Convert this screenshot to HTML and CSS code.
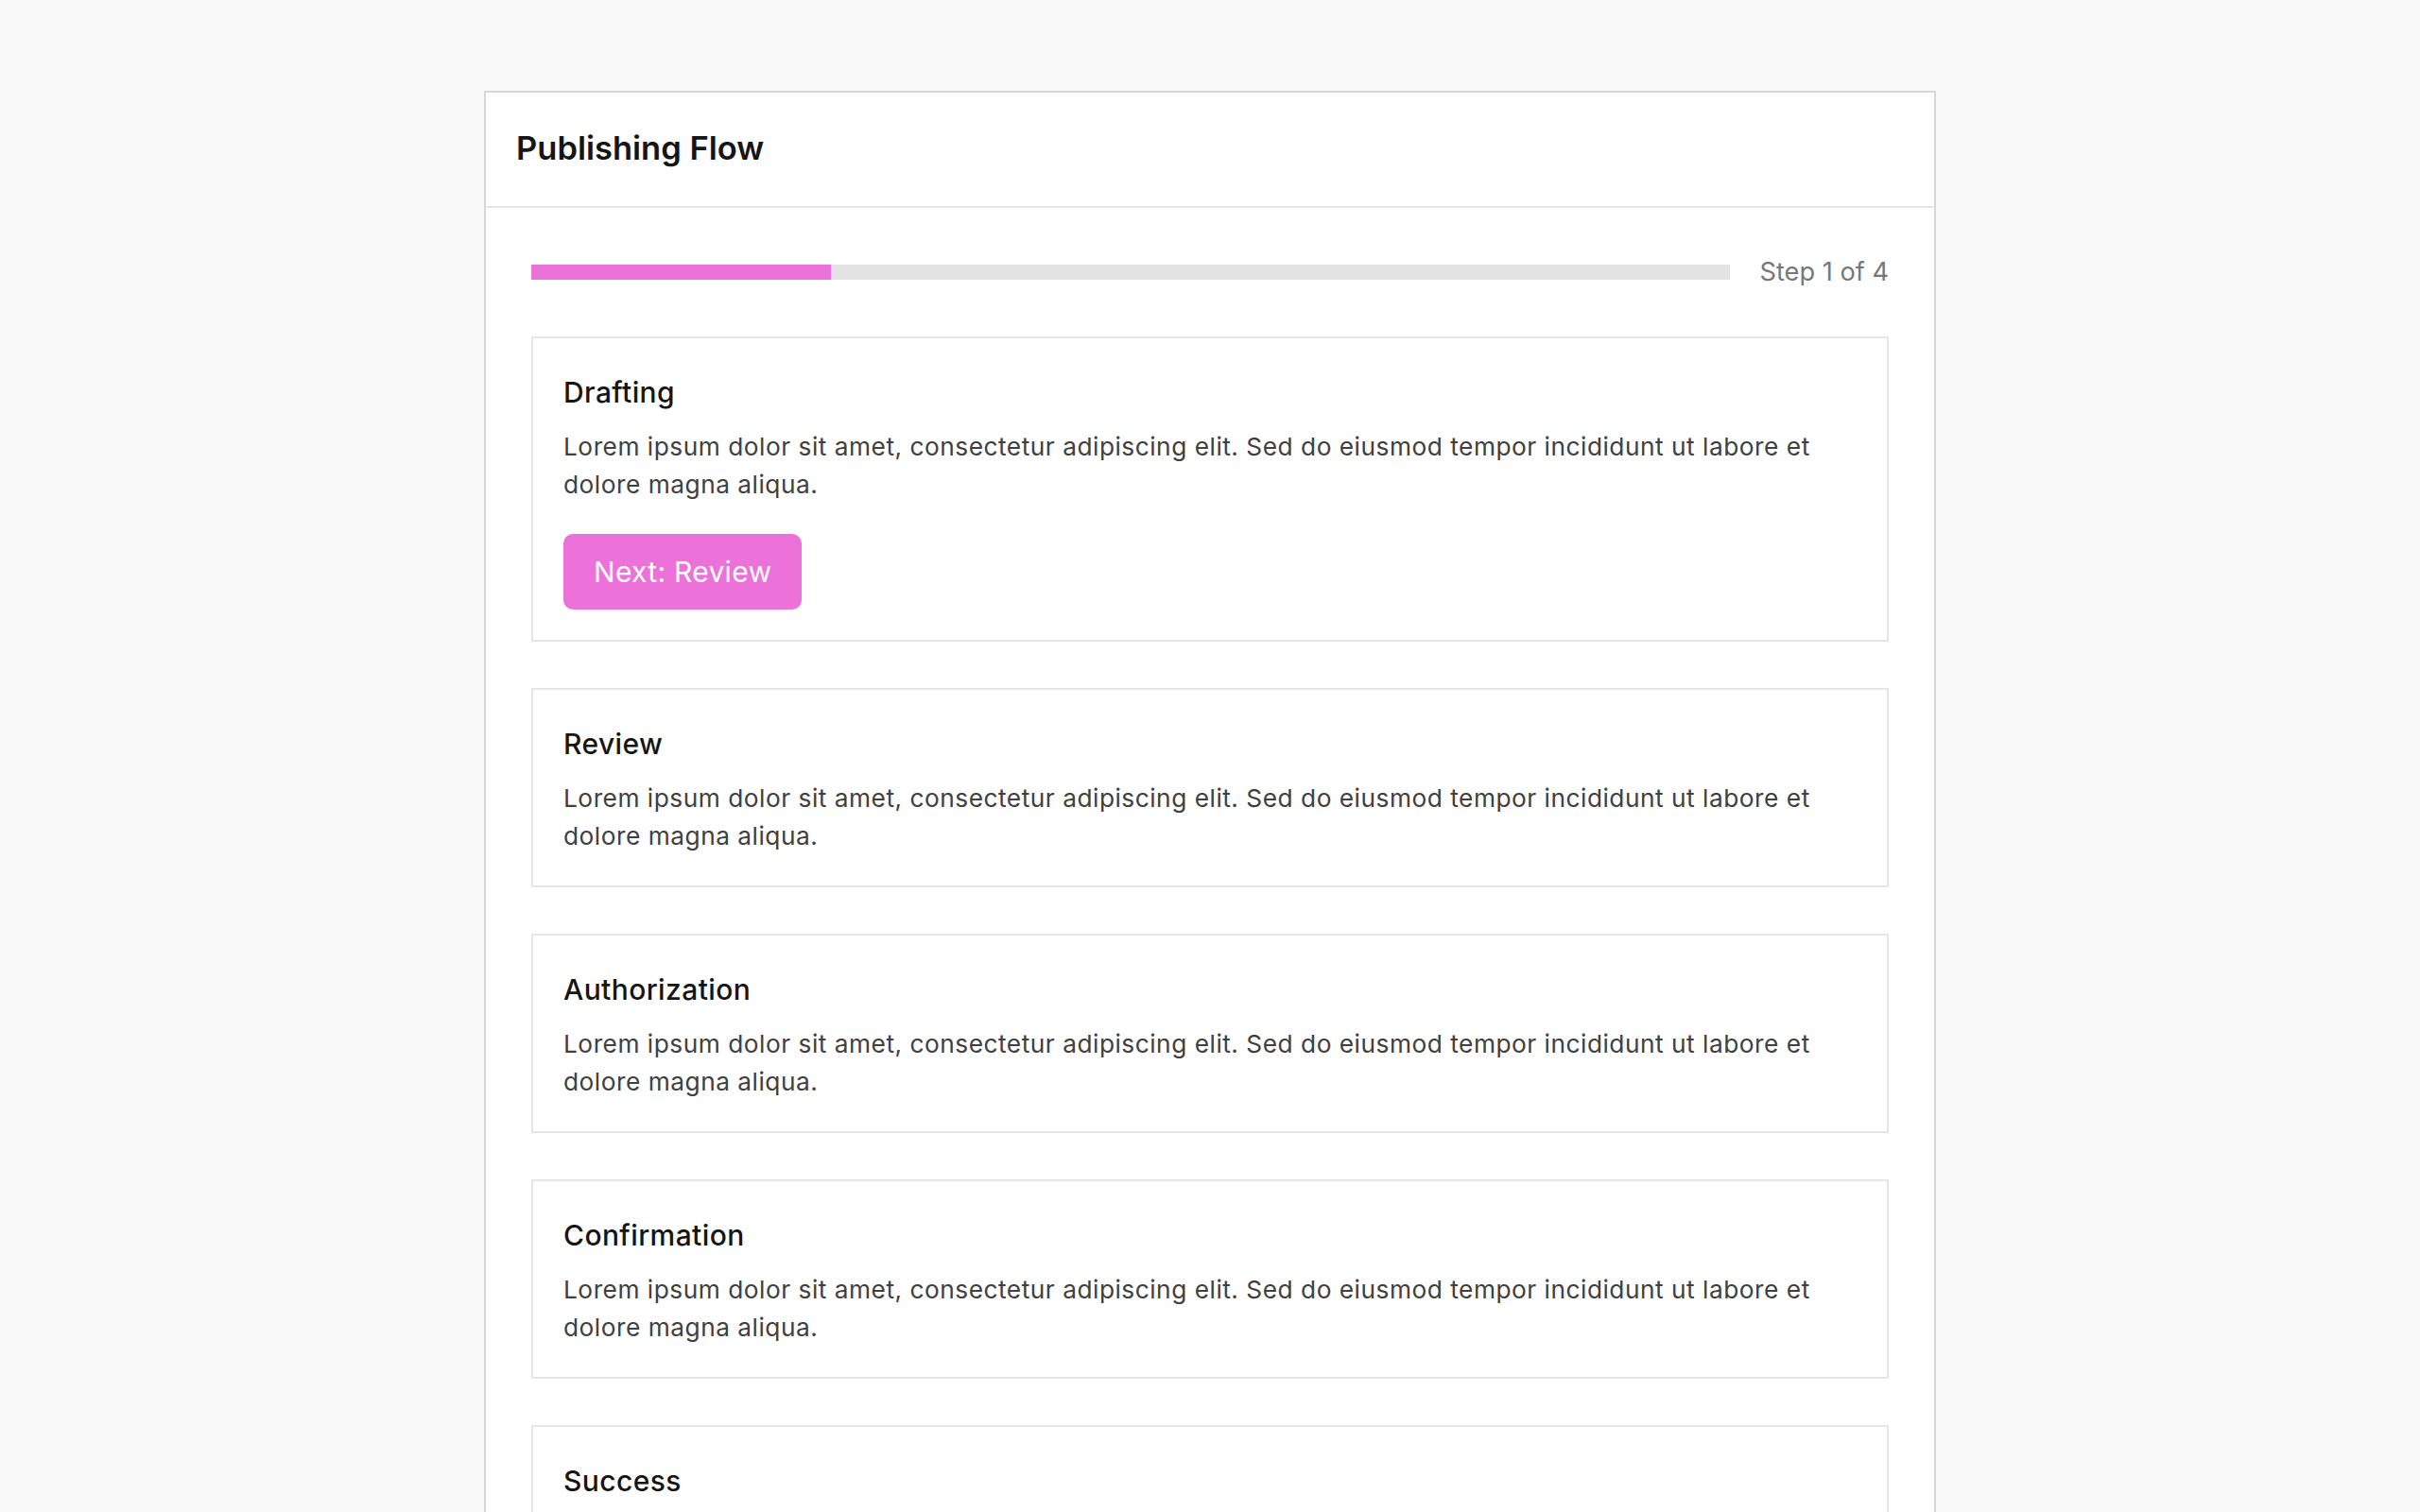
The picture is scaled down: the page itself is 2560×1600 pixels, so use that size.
FILE: index.html
```html
<!DOCTYPE html>
<html lang="en">

<head>
    <meta charset="UTF-8">
    <meta name="viewport" content="width=device-width, initial-scale=1.0">
    <title>Publishing Flow</title>
    <link rel="stylesheet" href="styles.css">
</head>

<body>
    <div class="flow">
        <div class="flow-header">
            <h1>Publishing Flow</h1>
        </div>
        <div class="flow-body">
            <div class="progress-row">
                <div class="progress">
                    <div class="progress-fill" style="width: 25%"></div>
                </div>
                <span class="progress-label">Step 1 of 4</span>
            </div>

            <div class="step">
                <h3>Drafting</h3>
                <p>Lorem ipsum dolor sit amet, consectetur adipiscing elit. Sed do eiusmod tempor incididunt ut labore et dolore magna aliqua.</p>
                <button class="next-button">Next: Review</button>
            </div>

            <div class="step">
                <h3>Review</h3>
                <p>Lorem ipsum dolor sit amet, consectetur adipiscing elit. Sed do eiusmod tempor incididunt ut labore et dolore magna aliqua.</p>
            </div>

            <div class="step">
                <h3>Authorization</h3>
                <p>Lorem ipsum dolor sit amet, consectetur adipiscing elit. Sed do eiusmod tempor incididunt ut labore et dolore magna aliqua.</p>
            </div>

            <div class="step">
                <h3>Confirmation</h3>
                <p>Lorem ipsum dolor sit amet, consectetur adipiscing elit. Sed do eiusmod tempor incididunt ut labore et dolore magna aliqua.</p>
            </div>

            <div class="step">
                <h3>Success</h3>
                <p>Lorem ipsum dolor sit amet, consectetur adipiscing elit. Sed do eiusmod tempor incididunt ut labore et dolore magna aliqua.</p>
            </div>
        </div>
    </div>
</body>

</html>
```

FILE: styles.css
```css
body {
    font-family: Inter, 'Noto Sans', sans-serif;
    background: #f9f9f9;
    color: #111;
    margin: 0;
    padding: 96px 0;
}

.flow {
    width: 1536px;
    margin: 0 auto;
    background: #fff;
    border: 2px solid #d6d6d6;
    box-sizing: border-box;
}

.flow-header {
    padding: 37px 32px 39px;
    border-bottom: 2px solid #e5e5e5;
}

.flow-header h1 {
    margin: 0;
    font-size: 34.5px;
    line-height: 44px;
    font-weight: 600;
    color: #151515;
}

.flow-body {
    padding: 48px;
}

.progress-row {
    display: flex;
    align-items: center;
    gap: 32px;
    margin-bottom: 48px;
}

.progress {
    flex: 1;
    height: 16px;
    background: #e3e3e3;
}

.progress-fill {
    height: 100%;
    background: #ec72da;
}

.progress-label {
    font-size: 27.2px;
    line-height: 40px;
    color: #777;
}

.step {
    border: 2px solid #e5e5e5;
    padding: 32px;
    margin-bottom: 49px;
}

.step h3 {
    margin: 0 0 13px;
    font-size: 30px;
    line-height: 50px;
    letter-spacing: 0.4px;
    font-weight: 500;
    color: #151515;
}

.step p {
    margin: 0;
    font-size: 26.3px;
    line-height: 40px;
    letter-spacing: 0.5px;
    color: #404040;
}

.next-button {
    margin-top: 32px;
    padding: 16px 32px;
    border: none;
    border-radius: 10px;
    background: #ec72da;
    color: #fff;
    font-family: inherit;
    font-size: 30px;
    line-height: 48px;
    letter-spacing: 0.3px;
    cursor: pointer;
}
```
